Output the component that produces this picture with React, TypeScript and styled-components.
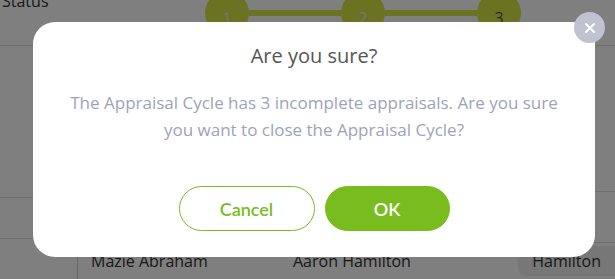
import React from 'react'
import styled, { createGlobalStyle } from 'styled-components'

const GlobalStyle = createGlobalStyle`
	html, body {
		margin: 0;
		padding: 0;
		width: 100%;
		height: 100%;
		overflow: hidden;
	}
	body {
		font-family: 'Open Sans', Lato, sans-serif;
		background: #fff;
	}
`

const steps = [1, 2, 3]

export default function App() {
	return (
		<>
			<GlobalStyle />
			<Page>
				<TopBar>
					<StatusLabel>Status</StatusLabel>
					<Stepper>
						{steps.map((n, i) => (
							<React.Fragment key={n}>
								{i > 0 && <StepLine />}
								<StepDot $current={n === 3}>{n}</StepDot>
							</React.Fragment>
						))}
					</Stepper>
				</TopBar>
				<Body>
					<SideCol>
						<SideRow />
						<SideRow />
					</SideCol>
					<TableArea>
						<TableRow />
						<TableRow />
						<NameRow>
							<Name>Mazie Abraham</Name>
							<Name>Aaron Hamilton</Name>
							<Chip>Hamilton</Chip>
						</NameRow>
					</TableArea>
				</Body>
			</Page>

			<Backdrop>
				<Dialog role="dialog">
					<CloseButton aria-label="Close">
						<svg width="12" height="12" viewBox="0 0 12 12">
							<path d="M2 2 L10 10 M10 2 L2 10" stroke="#fff" strokeWidth="2" strokeLinecap="round" />
						</svg>
					</CloseButton>
					<Title>Are you sure?</Title>
					<Message>
						The Appraisal Cycle has 3 incomplete appraisals. Are you sure
						<br />
						you want to close the Appraisal Cycle?
					</Message>
					<Actions>
						<ActionButton $variant="outline">Cancel</ActionButton>
						<ActionButton $variant="solid">OK</ActionButton>
					</Actions>
				</Dialog>
			</Backdrop>
		</>
	)
}

const Page = styled.div`
	width: 615px;
	height: 279px;
	display: flex;
	flex-direction: column;
	color: #333;
	background: #fff;
`

const TopBar = styled.div`
	height: 45px;
	display: flex;
	align-items: flex-start;
	border-bottom: 1px solid #ddd;
`

const StatusLabel = styled.div`
	font-size: 16px;
	margin-top: -10px;
	margin-left: 2px;
	width: 203px;
`

const Stepper = styled.div`
	display: flex;
	align-items: center;
	margin-top: -9px;
	flex: 1;
`

const StepDot = styled.div<{ $current?: boolean }>`
	width: 44px;
	height: 44px;
	border-radius: 50%;
	flex: none;
	background: #d6e444;
	color: ${(p) => (p.$current ? '#555' : '#eee')};
	display: flex;
	align-items: center;
	justify-content: center;
	font-size: 16px;
	padding-top: 10px;
	box-sizing: border-box;
`

const StepLine = styled.div`
	width: 92px;
	height: 6px;
	background: #d6e444;
`

const Body = styled.div`
	flex: 1;
	display: flex;
`

const SideCol = styled.div`
	width: 77px;
	border-right: 1px solid #ccc;
	display: flex;
	flex-direction: column;
	justify-content: flex-end;
`

const SideRow = styled.div`
	height: 40px;
	border-top: 1px solid #ddd;
`

const TableArea = styled.div`
	flex: 1;
	display: flex;
	flex-direction: column;
	justify-content: flex-end;
`

const TableRow = styled.div`
	height: 50px;
	border-bottom: 1px solid #ddd;
`

const NameRow = styled.div`
	height: 36px;
	display: flex;
	align-items: center;
	padding-left: 13px;
`

const Name = styled.div`
	width: 202px;
	font-size: 16px;
`

const Chip = styled.div`
	margin-left: auto;
	padding: 4px 14px;
	border-radius: 8px 0 0 8px;
	background: #eee;
	font-size: 16px;
	white-space: nowrap;
`

const Backdrop = styled.div`
	position: fixed;
	inset: 0;
	background: rgba(0, 0, 0, 0.5);
	display: flex;
	align-items: flex-start;
	justify-content: center;
`

const Dialog = styled.div`
	position: relative;
	margin-top: 22px;
	margin-left: 13px;
	width: 562px;
	height: 235px;
	box-sizing: border-box;
	background: #fff;
	border-radius: 22px;
	display: flex;
	flex-direction: column;
	align-items: center;
	padding-top: 20px;
`

const CloseButton = styled.button`
	position: absolute;
	top: -10px;
	right: -10px;
	width: 31px;
	height: 31px;
	border-radius: 50%;
	border: none;
	background: #bfc3cf;
	display: flex;
	align-items: center;
	justify-content: center;
	padding: 0;
	cursor: pointer;
`

const Title = styled.h2`
	margin: 0;
	font-size: 20px;
	font-weight: 400;
	color: #555;
	line-height: 28px;
`

const Message = styled.p`
	margin: 19px 0 0;
	font-size: 17px;
	line-height: 27px;
	color: #9ca4b6;
	text-align: center;
`

const Actions = styled.div`
	display: flex;
	gap: 10px;
	margin-top: 43px;
`

const ActionButton = styled.button<{ $variant: 'outline' | 'solid' }>`
	height: 45px;
	width: ${(p) => (p.$variant === 'outline' ? '136px' : '125px')};
	border-radius: 23px;
	font-family: Lato, 'Open Sans', sans-serif;
	font-size: 18px;
	font-weight: 600;
	cursor: pointer;
	border: 1px solid #78bc1e;
	background: ${(p) => (p.$variant === 'solid' ? '#78bc1e' : '#fff')};
	color: ${(p) => (p.$variant === 'solid' ? '#fff' : '#78bc1e')};
`
